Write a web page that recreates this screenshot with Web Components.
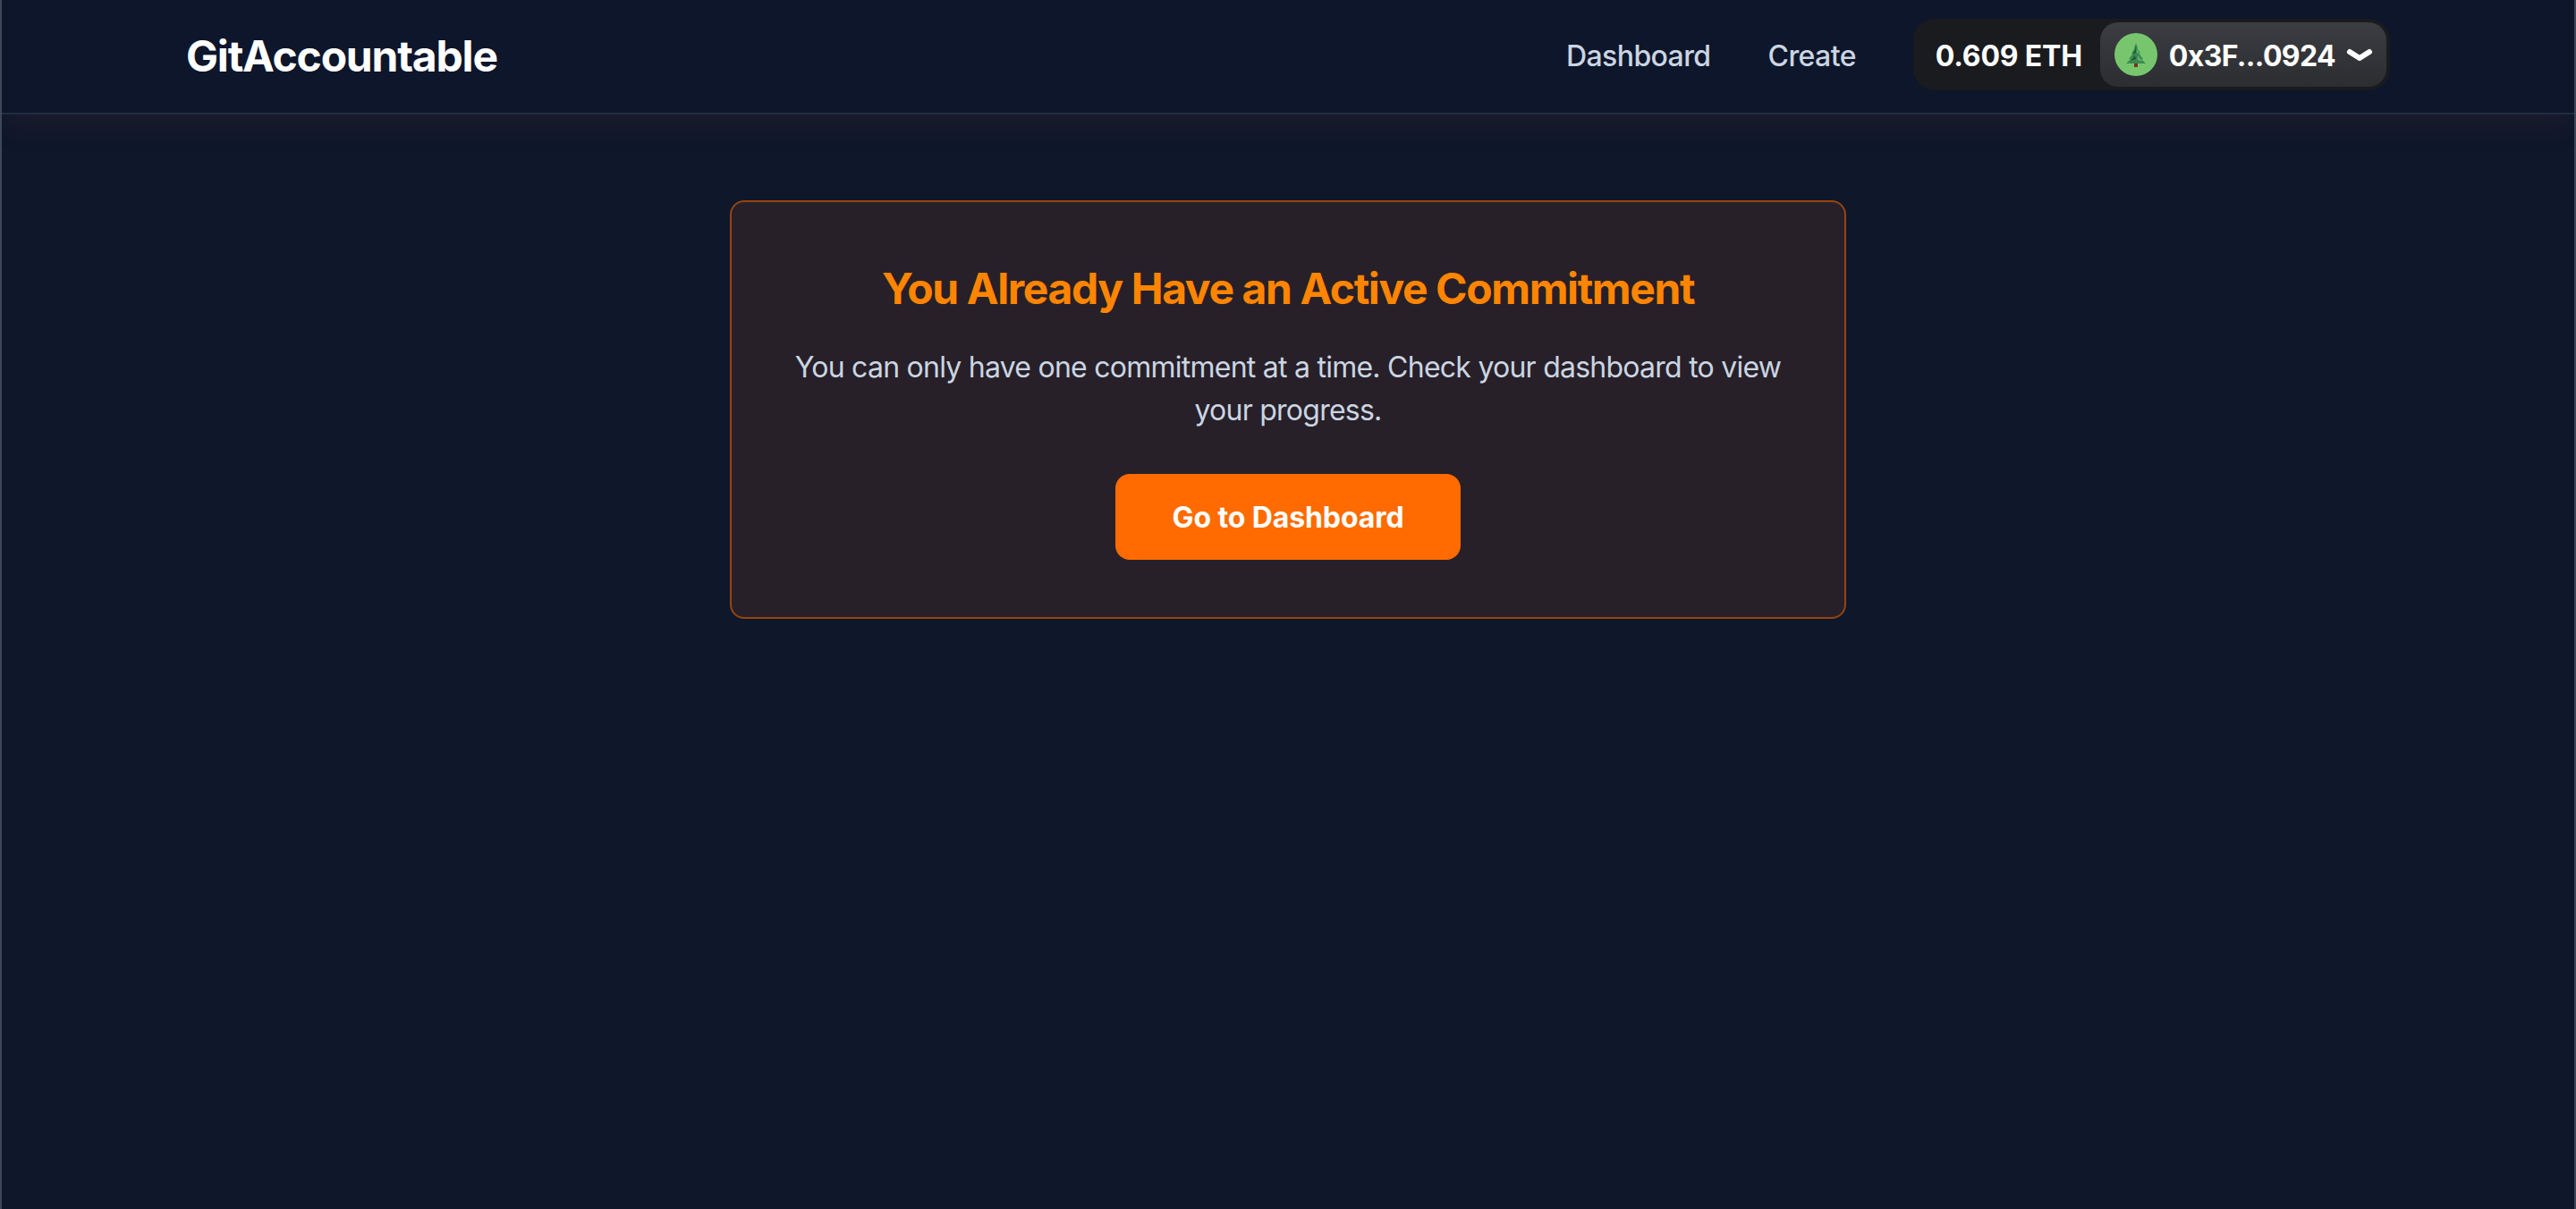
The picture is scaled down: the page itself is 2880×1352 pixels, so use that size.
<!DOCTYPE html>
<html lang="en">
<head>
<meta charset="utf-8">
<title>GitAccountable</title>
<style>
  html, body { margin: 0; height: 100%; }
  body {
    background: #0f172a;
    font-family: Inter, "Liberation Sans", sans-serif;
    color: #fff;
  }
</style>
</head>
<body>
<app-shell>
  <top-nav slot="nav">
    <nav-link>Dashboard</nav-link>
    <nav-link>Create</nav-link>
    <wallet-button balance="0.609 ETH" address="0x3F...0924"></wallet-button>
  </top-nav>
  <notice-card heading="You Already Have an Active Commitment" action="Go to Dashboard">
    You can only have one commitment at a time. Check your dashboard to view your progress.
  </notice-card>
</app-shell>

<script>
  class AppShell extends HTMLElement {
    constructor() {
      super();
      this.attachShadow({mode: 'open'});
      this.shadowRoot.innerHTML = `
      <style>
        :host {
          display: block;
          height: 1352px;
          box-sizing: border-box;
          border-left: 2px solid #3d485a;
          border-right: 2px solid #3d485a;
          overflow: hidden;
          background: #0f172a;
        }
        main {
          display: flex;
          justify-content: center;
          padding-top: 96px;
        }
      </style>
      <slot name="nav"></slot>
      <main><slot></slot></main>
      `;
    }
  }

  class TopNav extends HTMLElement {
    constructor() {
      super();
      this.attachShadow({mode: 'open'});
      this.shadowRoot.innerHTML = `
      <style>
        :host {
          display: block;
          background: #0d162b;
          border-bottom: 2px solid #1f2d44;
          box-shadow: 0 14px 30px -4px rgba(70, 50, 50, .24);
          position: relative;
        }
        .inner {
          box-sizing: border-box;
          width: 2560px;
          height: 126px;
          margin: 0 auto;
          padding: 22px 48px 24px;
          display: flex;
          align-items: center;
          justify-content: space-between;
        }
        .logo {
          font-size: 48px;
          line-height: 64px;
          font-weight: 700;
          color: #fff;
          letter-spacing: -1.2px;
          padding-top: 2px;
        }
        .links {
          display: flex;
          align-items: center;
          gap: 64px;
        }
      </style>
      <div class="inner">
        <span class="logo">GitAccountable</span>
        <div class="links"><slot></slot></div>
      </div>
      `;
    }
  }

  class NavLink extends HTMLElement {
    constructor() {
      super();
      this.attachShadow({mode: 'open'});
      this.shadowRoot.innerHTML = `
      <style>
        :host {
          display: block;
          font-size: 32px;
          line-height: 48px;
          font-weight: 500;
          color: #cbd5e1;
          letter-spacing: -0.6px;
          padding-top: 2px;
        }
      </style>
      <slot></slot>
      `;
    }
  }

  class WalletButton extends HTMLElement {
    constructor() {
      super();
      this.attachShadow({mode: 'open'});
      this.shadowRoot.innerHTML = `
      <style>
        :host {
          display: flex;
          align-items: center;
          height: 80px;
          box-sizing: border-box;
          padding: 4px;
          margin-top: -2px;
          background: #1a1b1f;
          border-radius: 24px;
          font-size: 32px;
          font-weight: 700;
          color: #fff;
        }
        .balance {
          padding: 3px 20px 0 21px;
          line-height: 69px;
          letter-spacing: -0.2px;
        }
        .account {
          display: flex;
          align-items: center;
          height: 72px;
          padding: 0 13px 0 16px;
          border-radius: 20px;
          background: linear-gradient(#3c3d42, #2c2d31);
        }
        .avatar {
          width: 48px;
          height: 48px;
          margin-right: 13px;
          border-radius: 50%;
          background: #77c66e;
          display: flex;
          align-items: center;
          justify-content: center;
        }
        .addr { letter-spacing: -0.65px; padding-top: 3px; }
        .chev { display: block; margin-left: 10px; }
      </style>
      <span class="balance">${this.getAttribute('balance')}</span>
      <div class="account">
        <span class="avatar">
          <svg width="22" height="27" viewBox="0 0 22 27">
            <rect x="9" y="22" width="4" height="5" fill="#7a3320"/>
            <path d="M11 0 L13 6 L12.5 6 L16 12 L14.5 12 L19 18 L17 18 L22 23 L0 23 L5 18 L3 18 L7.5 12 L6 12 L9.5 6 L9 6 Z" fill="#3a8a50"/>
            <path d="M11 3 L10 8 L7 13 L11 11 Z M10 14 L5 20 L11 18 Z" fill="#1c5c34"/>
            <path d="M12 7 L15 12 L12 11 Z M13 14 L18 21 L13 19 Z" fill="#66b074"/>
          </svg>
        </span>
        <span class="addr">${this.getAttribute('address')}</span>
        <svg class="chev" width="34" height="20" viewBox="0 0 34 20" fill="none">
          <path d="M6 7 L17 14 L28 7" stroke="#fff" stroke-width="6" stroke-linecap="round" stroke-linejoin="round"/>
        </svg>
      </div>
      `;
    }
  }

  class NoticeCard extends HTMLElement {
    constructor() {
      super();
      this.attachShadow({mode: 'open'});
      this.shadowRoot.innerHTML = `
      <style>
        :host {
          display: block;
          box-sizing: border-box;
          width: 1248px;
          padding: 64px;
          text-align: center;
          background: #272029;
          border: 2px solid #964510;
          border-radius: 16px;
        }
        h2 {
          margin: 0 0 31px;
          padding-top: 1px;
          font-size: 48px;
          line-height: 64px;
          font-weight: 700;
          color: #ff8500;
          letter-spacing: -1.4px;
        }
        p {
          margin: 0 0 47px;
          padding-top: 1px;
          font-size: 32px;
          line-height: 48px;
          color: #cbd5e1;
          letter-spacing: -0.75px;
        }
        button {
          display: inline-block;
          border: 0;
          padding: 25px 64px 23px;
          font: 700 32px/48px Inter, "Liberation Sans", sans-serif;
          letter-spacing: -0.1px;
          color: #fff;
          background: #ff6b00;
          border-radius: 16px;
          vertical-align: top;
        }
      </style>
      <h2>${this.getAttribute('heading')}</h2>
      <p><slot></slot></p>
      <button type="button">${this.getAttribute('action')}</button>
      `;
    }
  }

  customElements.define('app-shell', AppShell);
  customElements.define('top-nav', TopNav);
  customElements.define('nav-link', NavLink);
  customElements.define('wallet-button', WalletButton);
  customElements.define('notice-card', NoticeCard);
</script>
</body>
</html>
